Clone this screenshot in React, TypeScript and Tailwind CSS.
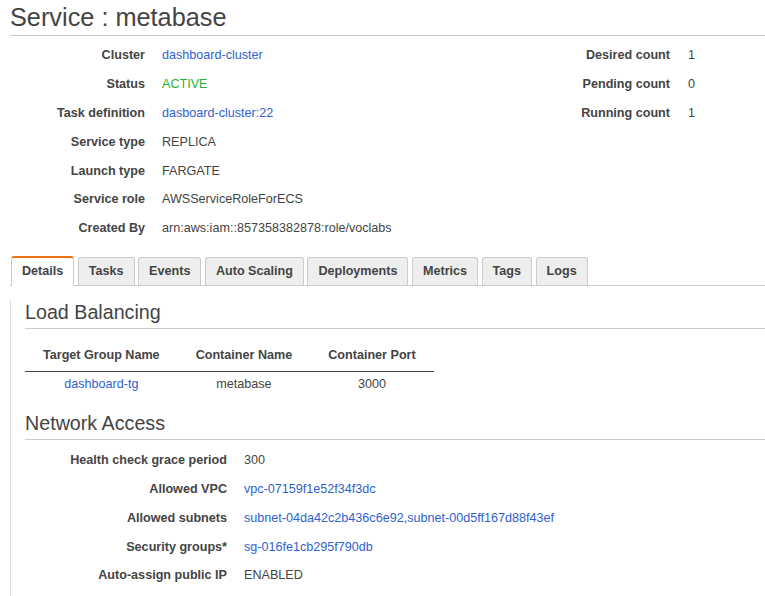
import React from 'react';

const font = { fontFamily: '"Liberation Sans", Arial, sans-serif' };

const topLeft: { label: string; value: string; kind?: 'link' | 'ok' }[] = [
  { label: 'Cluster', value: 'dashboard-cluster', kind: 'link' },
  { label: 'Status', value: 'ACTIVE', kind: 'ok' },
  { label: 'Task definition', value: 'dasboard-cluster:22', kind: 'link' },
  { label: 'Service type', value: 'REPLICA' },
  { label: 'Launch type', value: 'FARGATE' },
  { label: 'Service role', value: 'AWSServiceRoleForECS' },
  { label: 'Created By', value: 'arn:aws:iam::857358382878:role/voclabs' },
];

const topRight = [
  { label: 'Desired count', value: '1' },
  { label: 'Pending count', value: '0' },
  { label: 'Running count', value: '1' },
];

const tabs = ['Details', 'Tasks', 'Events', 'Auto Scaling', 'Deployments', 'Metrics', 'Tags', 'Logs'];

const network: { label: string; value: string; link?: boolean }[] = [
  { label: 'Health check grace period', value: '300' },
  { label: 'Allowed VPC', value: 'vpc-07159f1e52f34f3dc', link: true },
  { label: 'Allowed subnets', value: 'subnet-04da42c2b436c6e92,subnet-00d5ff167d88f43ef', link: true },
  { label: 'Security groups*', value: 'sg-016fe1cb295f790db', link: true },
  { label: 'Auto-assign public IP', value: 'ENABLED' },
];

function valueClass(kind?: string) {
  if (kind === 'link') return 'text-[#2f5fd0]';
  if (kind === 'ok') return 'text-[#1fb33a]';
  return 'text-[#444]';
}

export default function App() {
  return (
    <div style={font} className="w-[765px] h-[596px] overflow-hidden bg-white text-[12.6px] text-[#444]">
      {/* Header */}
      <div className="pl-[10px] pt-[2px]">
        <h1 className="text-[25.3px] leading-[30px] pb-[3px] border-b border-[#ccc]">Service : metabase</h1>
      </div>

      {/* Summary */}
      <div className="flex pt-[5px] pl-[10px]">
        <div className="flex-1">
          {topLeft.map((r) => (
            <div key={r.label} className="flex items-center h-[28.9px]">
              <div className="w-[135px] text-right font-bold">{r.label}</div>
              <div className={`pl-[17px] ${valueClass(r.kind)}`}>{r.value}</div>
            </div>
          ))}
        </div>
        <div className="w-[195px]">
          {topRight.map((r) => (
            <div key={r.label} className="flex items-center h-[28.9px]">
              <div className="w-[100px] text-right font-bold">{r.label}</div>
              <div className="pl-[18px]">{r.value}</div>
            </div>
          ))}
        </div>
      </div>

      {/* Tabs */}
      <div className="mt-[13px] ml-[10px] flex items-end gap-[3.5px] border-b border-[#ccc] pl-[1px]">
        {tabs.map((t, i) =>
          i === 0 ? (
            <div
              key={t}
              className="-mb-px h-[30px] px-[10px] pb-[2px] flex items-center font-bold bg-white border-x border-[#ccc] border-t-2 border-t-[#ec7211] rounded-t-[3px]"
            >
              {t}
            </div>
          ) : (
            <div
              key={t}
              className="h-[28px] px-[10px] flex items-center font-bold bg-[#eee] border border-b-0 border-[#ccc] rounded-t-[3px]"
            >
              {t}
            </div>
          )
        )}
      </div>

      {/* Content pane */}
      <div className="ml-[10px] border-l border-[#ddd] pl-[14px] pb-[40px]">
        <h2 className="mt-[14px] text-[19.7px] leading-[24px] pb-[4px] border-b border-[#ccc]">Load Balancing</h2>

        <table className="mt-[11px] border-collapse">
          <thead>
            <tr className="h-[31px] border-b border-[#444]">
              <th className="px-[18px] font-bold text-center">Target Group Name</th>
              <th className="px-[18px] font-bold text-center">Container Name</th>
              <th className="px-[18px] font-bold text-center">Container Port</th>
            </tr>
          </thead>
          <tbody>
            <tr className="h-[26px]">
              <td className="px-[18px] text-center text-[#2f5fd0]">dashboard-tg</td>
              <td className="px-[18px] text-center">metabase</td>
              <td className="px-[18px] text-center">3000</td>
            </tr>
          </tbody>
        </table>

        <h2 className="mt-[14px] text-[19.7px] leading-[24px] pb-[4px] border-b border-[#ccc]">Network Access</h2>

        <div className="pt-[6px]">
          {network.map((r) => (
            <div key={r.label} className="flex items-center h-[28.8px]">
              <div className="w-[202px] text-right font-bold">{r.label}</div>
              <div className={`pl-[17px] ${r.link ? 'text-[#2f5fd0]' : 'text-[#444]'}`}>{r.value}</div>
            </div>
          ))}
        </div>
      </div>
    </div>
  );
}
